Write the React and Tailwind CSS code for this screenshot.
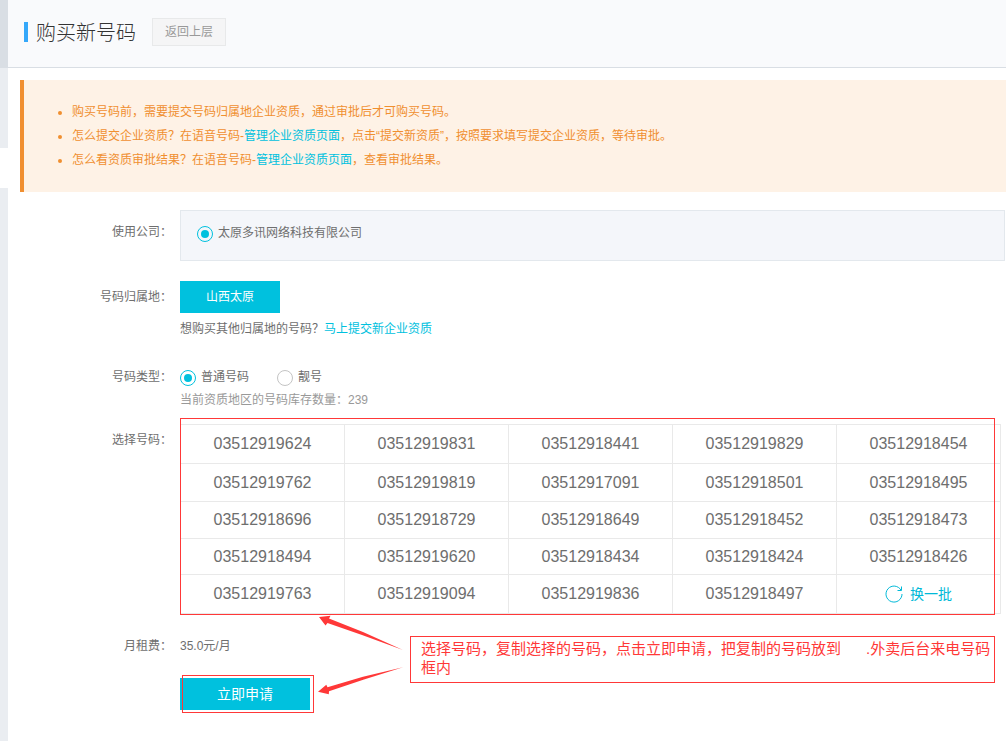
import { useState } from 'react'

const numberRows = [
  { height: 'h-[39px]', numbers: ['03512919624', '03512919831', '03512918441', '03512919829', '03512918454'] },
  { height: 'h-[38px]', numbers: ['03512919762', '03512919819', '03512917091', '03512918501', '03512918495'] },
  { height: 'h-[37px]', numbers: ['03512918696', '03512918729', '03512918649', '03512918452', '03512918473'] },
  { height: 'h-[36px]', numbers: ['03512918494', '03512919620', '03512918434', '03512918424', '03512918426'] },
  { height: 'h-[39px]', numbers: ['03512919763', '03512919094', '03512919836', '03512918497'] },
]

function Radio({ id, name, label, checked, onChange }) {
  return (
    <div className="flex items-center gap-[5px] h-6">
      <input
        id={id}
        type="radio"
        name={name}
        checked={checked}
        onChange={onChange}
        className="appearance-none w-4 h-4 mt-0.5 p-[3px] rounded-full border border-[#c4c4c4] bg-white bg-clip-content checked:border-[#00c1de] checked:bg-[#00c1de]"
      />
      <label htmlFor={id}>{label}</label>
    </div>
  )
}

function Row({ label, labelClass, className, children }) {
  return (
    <div className={`flex ${className}`}>
      <div className={`w-[164px] mr-2 shrink-0 text-right ${labelClass}`}>{label}</div>
      <div className="flex-1 min-w-0">{children}</div>
    </div>
  )
}

function RefreshIcon() {
  return (
    <svg width="18" height="18" viewBox="0 0 18 18" fill="none" stroke="currentColor" strokeWidth="1">
      <path d="M17 9A8 8 0 1 1 16 5.2" />
      <path d="M16.5 1.5V5.5H12.5" />
    </svg>
  )
}

function Sidebar() {
  return (
    <div className="w-2 shrink-0 flex flex-col">
      <div className="h-[68px] bg-[#d9dee4]" />
      <div className="h-20 bg-[#eaedf1]" />
      <div className="h-10 bg-white" />
      <div className="flex-1 bg-[#eaedf1]" />
    </div>
  )
}

function App() {
  const [type, setType] = useState('normal')

  return (
    <div className="min-h-screen flex bg-white text-xs text-[#6e6e6e] font-['Liberation_Sans','Noto_Sans_CJK_SC',sans-serif]">
      <Sidebar />

      <div className="flex-1 min-w-0">
        <header className="h-[68px] pl-4 pb-[3px] flex items-center bg-[#f9fafc] border-b border-[#d9dee4]">
          <div className="w-1 h-5 mr-2 bg-[#35a8fa]" />
          <h1 className="pt-0.5 text-xl leading-7 font-light text-[#333]">购买新号码</h1>
          <button className="ml-4 h-7 px-3 border border-[#e8e9ea] bg-[#f5f5f6] text-[#999]">返回上层</button>
        </header>

        <div className="mt-3 ml-3 py-5 pl-12 border-l-4 border-[#f08f30] bg-[#fef2e6] text-[#f08f30]">
          <ul className="list-disc leading-6">
            <li>购买号码前，需要提交号码归属地企业资质，通过审批后才可购买号码。</li>
            <li>
              怎么提交企业资质？在语音号码-<a href="#manage" className="text-[#00c1de]">管理企业资质页面</a>，点击“提交新资质”，按照要求填写提交企业资质，等待审批。
            </li>
            <li>
              怎么看资质审批结果？在语音号码-<a href="#manage" className="text-[#00c1de]">管理企业资质页面</a>，查看审批结果。
            </li>
          </ul>
        </div>

        <Row label="使用公司：" labelClass="pt-3 leading-5" className="mt-[18px] mr-px">
          <div className="h-[51px] pt-[10px] pl-4 border border-[#e3e8ed] bg-[#f4f6fa]">
            <Radio id="company" name="company" label="太原多讯网络科技有限公司" checked onChange={() => {}} />
          </div>
        </Row>

        <Row label="号码归属地：" labelClass="leading-8" className="mt-5">
          <button className="block w-[100px] h-8 bg-[#00c1de] text-white">山西太原</button>
          <p className="leading-8">
            想购买其他归属地的号码？<a href="#new" className="text-[#00c1de]">马上提交新企业资质</a>
          </p>
        </Row>

        <Row label="号码类型：" labelClass="leading-6" className="mt-5">
          <div className="flex gap-7">
            <Radio id="normal" name="type" label="普通号码" checked={type === 'normal'} onChange={() => setType('normal')} />
            <Radio id="pretty" name="type" label="靓号" checked={type === 'pretty'} onChange={() => setType('pretty')} />
          </div>
          <p className="leading-[22px] text-[#999]">当前资质地区的号码库存数量：239</p>
        </Row>

        <Row label="选择号码：" labelClass="pt-1.5 leading-5" className="mt-[13px] mr-[5px]">
          <div className="relative">
            <table className="w-full table-fixed border-collapse border border-[#e9e9e9] text-base leading-6 text-center">
              <tbody>
                {numberRows.map((row) => (
                  <tr key={row.numbers[0]} className={row.height}>
                    {row.numbers.map((number) => (
                      <td key={number} className="p-0 border border-[#e9e9e9]">{number}</td>
                    ))}
                    {row.numbers.length < 5 && (
                      <td className="p-0 pb-0.5 border border-[#e9e9e9]">
                        <button className="inline-flex items-center gap-[7px] align-middle text-sm text-[#00b9d8]">
                          <RefreshIcon />
                          换一批
                        </button>
                      </td>
                    )}
                  </tr>
                ))}
              </tbody>
            </table>
            <div className="absolute left-0 right-1.5 -top-1.5 -bottom-px border border-[#ff3838] pointer-events-none" />
          </div>
        </Row>

        <div className="relative mt-[22px] pb-7">
          <Row label="月租费：" labelClass="leading-5" className="leading-5">
            35.0元/月
          </Row>
          <Row className="mt-[22px]">
            <div className="relative">
              <button className="block w-[130px] h-8 bg-[#00c1de] text-white text-sm">立即申请</button>
              <div className="absolute left-0.5 -top-[3px] w-[132px] h-[38px] border border-[#ff3838] pointer-events-none" />
            </div>
          </Row>

          {/* Callout and its arrows */}
          <svg className="absolute left-[310px] -top-[21px]" width="86" height="80" viewBox="0 0 86 80" fill="#ff3838">
            <path d="M1 2L12.5 .8L11 3.6L45 17L85 35L44 20L9.5 8L7.5 10.5Z" />
            <path d="M0 76.7L8.3 69.8L9.5 72.2L45 61.8L85 52.3L46 64.4L11 76.3L10.8 79.3Z" />
          </svg>
          <div className="absolute left-[402px] right-[11px] top-0 h-[47px] pt-0.5 pl-[10px] border border-[#ff3838] text-[15px] leading-[19px] text-[#ff3838]">
            <p className="whitespace-nowrap">
              选择号码，复制选择的号码，点击立即申请，把复制的号码放到{'\u00a0'.repeat(6)}.外卖后台来电号码
            </p>
            <p>框内</p>
          </div>
        </div>
      </div>
    </div>
  )
}

export default App
